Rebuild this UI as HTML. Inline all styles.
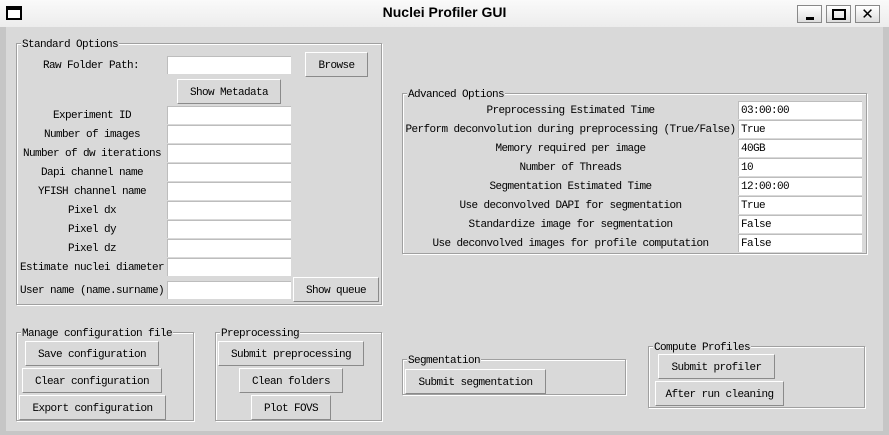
<!DOCTYPE html><html><head><style>
*{margin:0;padding:0;box-sizing:border-box}
body{width:889px;height:435px;background:#d9d9d9;position:relative;overflow:hidden;font-family:"Liberation Mono","DejaVu Sans Mono",monospace;font-size:11px;letter-spacing:-0.6px;color:#000}
.a{position:absolute}
.tb{left:0;top:0;width:889px;height:27px;background:linear-gradient(#fafafa,#ececec)}
.title{left:0;width:889px;top:4px;text-align:center;font:bold 14px "Liberation Sans",sans-serif;letter-spacing:0}
.wb{top:5px;width:25px;height:18px;border:1px solid #888;background:linear-gradient(#fff,#ddd)}
.fr{border:1px solid #a0a0a0;box-shadow:inset 1px 1px 0 #fff,1px 1px 0 #fff}
.lg{background:#d9d9d9;padding:0 1px;line-height:12px;padding-top:1px}
.e{background:#fff;border-top:1px solid #bdbdbd;border-left:1px solid #bdbdbd;height:18px;width:124px;line-height:19px;padding-left:2px}
.b{background:#d9d9d9;border:1px solid;border-color:#fff #8a8a8a #8a8a8a #fff;height:25px;line-height:26px;text-align:center}
.l{text-align:center;line-height:21px;height:18px}
</style></head><body>
<div class="a" style="left:0;top:27px;width:6px;height:408px;background:#c6c6c6"></div>
<div class="a" style="left:883px;top:27px;width:6px;height:408px;background:#c6c6c6"></div>
<div class="a" style="left:0;top:431px;width:889px;height:4px;background:#c6c6c6"></div>
<div class="a tb"></div>
<div class="a" style="left:6px;top:6px;width:16px;height:14px;border:2px solid #000;border-top-width:4px;background:#fff"></div>
<div class="a title">Nuclei Profiler GUI</div>
<div class="a wb" style="left:797px"><div class="a" style="left:8px;top:11px;width:8px;height:3px;background:#000"></div></div>
<div class="a wb" style="left:826px"><div class="a" style="left:5px;top:3px;width:14px;height:11px;border:2px solid #000;border-top-width:2px"></div></div>
<div class="a wb" style="left:855px;font:bold 15px 'DejaVu Sans',sans-serif;text-align:center;line-height:16px;letter-spacing:0">✕</div>

<div class="a fr" style="left:16px;top:43px;width:366px;height:262px"></div>
<div class="a lg" style="left:21px;top:38px">Standard Options</div>
<div class="a" style="left:43px;top:60px">Raw Folder Path:</div>
<div class="a e" style="left:167px;top:56px"></div>
<div class="a b" style="left:305px;top:52px;width:63px">Browse</div>
<div class="a b" style="left:177px;top:79px;width:104px">Show Metadata</div>

<div class="a l" style="left:17px;top:106px;width:150px">Experiment ID</div><div class="a e" style="left:167px;top:106px"></div>
<div class="a l" style="left:17px;top:125px;width:150px">Number of images</div><div class="a e" style="left:167px;top:125px"></div>
<div class="a l" style="left:17px;top:144px;width:150px">Number of dw iterations</div><div class="a e" style="left:167px;top:144px"></div>
<div class="a l" style="left:17px;top:163px;width:150px">Dapi channel name</div><div class="a e" style="left:167px;top:163px"></div>
<div class="a l" style="left:17px;top:182px;width:150px">YFISH channel name</div><div class="a e" style="left:167px;top:182px"></div>
<div class="a l" style="left:17px;top:201px;width:150px">Pixel dx</div><div class="a e" style="left:167px;top:201px"></div>
<div class="a l" style="left:17px;top:220px;width:150px">Pixel dy</div><div class="a e" style="left:167px;top:220px"></div>
<div class="a l" style="left:17px;top:239px;width:150px">Pixel dz</div><div class="a e" style="left:167px;top:239px"></div>
<div class="a l" style="left:17px;top:258px;width:150px">Estimate nuclei diameter</div><div class="a e" style="left:167px;top:258px"></div>
<div class="a l" style="left:17px;top:281px;width:150px">User name (name.surname)</div><div class="a e" style="left:167px;top:281px"></div>
<div class="a b" style="left:293px;top:277px;width:86px">Show queue</div>

<div class="a fr" style="left:402px;top:93px;width:465px;height:161px"></div>
<div class="a lg" style="left:407px;top:88px">Advanced Options</div>
<div class="a l" style="left:404px;top:101px;width:333px">Preprocessing Estimated Time</div><div class="a e" style="left:738px;top:101px">03:00:00</div>
<div class="a l" style="left:404px;top:120px;width:333px">Perform deconvolution during preprocessing (True/False)</div><div class="a e" style="left:738px;top:120px">True</div>
<div class="a l" style="left:404px;top:139px;width:333px">Memory required per image</div><div class="a e" style="left:738px;top:139px">40GB</div>
<div class="a l" style="left:404px;top:158px;width:333px">Number of Threads</div><div class="a e" style="left:738px;top:158px">10</div>
<div class="a l" style="left:404px;top:177px;width:333px">Segmentation Estimated Time</div><div class="a e" style="left:738px;top:177px">12:00:00</div>
<div class="a l" style="left:404px;top:196px;width:333px">Use deconvolved DAPI for segmentation</div><div class="a e" style="left:738px;top:196px">True</div>
<div class="a l" style="left:404px;top:215px;width:333px">Standardize image for segmentation</div><div class="a e" style="left:738px;top:215px">False</div>
<div class="a l" style="left:404px;top:234px;width:333px">Use deconvolved images for profile computation</div><div class="a e" style="left:738px;top:234px">False</div>

<div class="a fr" style="left:16px;top:332px;width:178px;height:89px"></div>
<div class="a lg" style="left:21px;top:327px">Manage configuration file</div>
<div class="a b" style="left:25px;top:341px;width:134px">Save configuration</div>
<div class="a b" style="left:22px;top:368px;width:140px">Clear configuration</div>
<div class="a b" style="left:19px;top:395px;width:147px">Export configuration</div>

<div class="a fr" style="left:215px;top:332px;width:167px;height:89px"></div>
<div class="a lg" style="left:220px;top:327px">Preprocessing</div>
<div class="a b" style="left:218px;top:341px;width:146px">Submit preprocessing</div>
<div class="a b" style="left:239px;top:368px;width:104px">Clean folders</div>
<div class="a b" style="left:251px;top:395px;width:80px">Plot FOVS</div>

<div class="a fr" style="left:402px;top:359px;width:224px;height:36px"></div>
<div class="a lg" style="left:407px;top:354px">Segmentation</div>
<div class="a b" style="left:405px;top:369px;width:141px">Submit segmentation</div>

<div class="a fr" style="left:648px;top:346px;width:217px;height:62px"></div>
<div class="a lg" style="left:653px;top:341px">Compute Profiles</div>
<div class="a b" style="left:658px;top:354px;width:117px">Submit profiler</div>
<div class="a b" style="left:655px;top:381px;width:129px">After run cleaning</div>
</body></html>
